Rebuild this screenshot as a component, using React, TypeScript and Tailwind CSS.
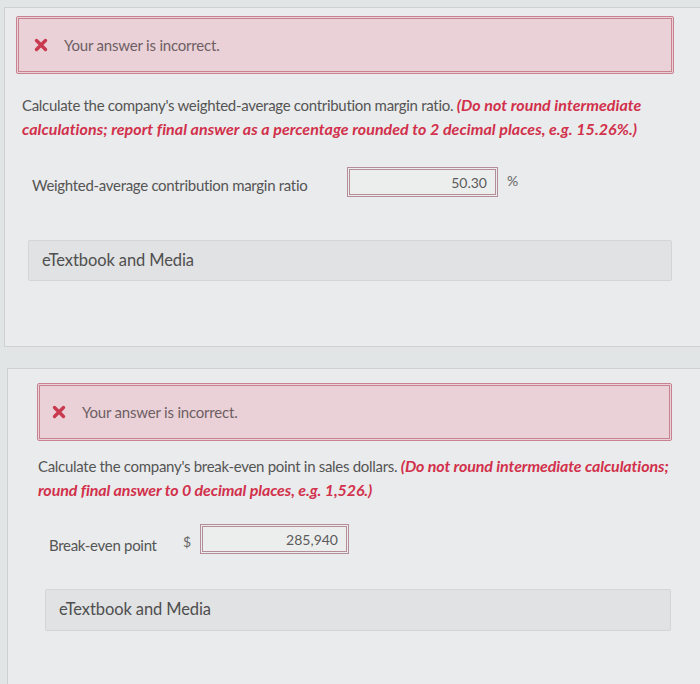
import React from "react";

function XIcon() {
  return (
    <svg width="14" height="14" viewBox="0 0 14 14" className="shrink-0">
      <path d="M2.5 2.5 L11.5 11.5 M11.5 2.5 L2.5 11.5" stroke="#c93a4f" strokeWidth="3.4" strokeLinecap="round" />
    </svg>
  );
}

function Alert({ className }: { className: string }) {
  return (
    <div className={"flex items-center border-[3px] border-double border-[#c98290] bg-[#e9d1d7] rounded-[2px] " + className}>
      <XIcon />
      <span className="ml-[16px] text-[15px] text-[#6e5e64] tracking-[-0.2px]">Your answer is incorrect.</span>
    </div>
  );
}

function Input({ value, className }: { value: string; className: string }) {
  return (
    <div className={"flex items-center justify-end border-[3px] border-double border-[#b58d98] bg-[#eceeee] pr-[8px] text-[14px] text-[#5b5b5b] " + className}>
      {value}
    </div>
  );
}

function Media({ className }: { className: string }) {
  return (
    <div className={"flex items-center border border-[#d3d6d7] bg-[#e0e2e3] rounded-[2px] pl-[13px] text-[16.5px] text-[#4f4f4f] tracking-[-0.1px] " + className}>
      eTextbook and Media
    </div>
  );
}

export default function App() {
  return (
    <div className="min-h-[684px] w-[700px] overflow-hidden bg-[#e2e5e6] font-['Lato','Noto_Sans',sans-serif] pt-[7px]">
      <div className="ml-[4px] w-[700px] h-[340px] border border-[#cdd1d2] bg-[#e9ebec] pt-[8px]">
        <Alert className="ml-[11px] w-[658px] h-[58px] pl-[15px]" />
        <p className="ml-[17px] mt-[19px] w-[660px] text-[15px] leading-[23px] text-[#555] tracking-[-0.3px]">
          Calculate the company's weighted-average contribution margin ratio.{" "}
          <b className="italic text-[16px] text-[#d2304b] tracking-[0.05px]">
            (Do not round intermediate calculations; report final answer as a percentage rounded to 2 decimal places, e.g. 15.26%.)
          </b>
        </p>
        <div className="mt-[26px] flex items-center">
          <span className="ml-[27px] w-[315px] pt-[7px] text-[15px] text-[#555] tracking-[-0.3px]">
            Weighted-average contribution margin ratio
          </span>
          <Input value="50.30" className="w-[151px] h-[30px]" />
          <span className="ml-[9px] text-[14px] text-[#666] self-start pt-[3px]">%</span>
        </div>
        <Media className="ml-[23px] mt-[43px] w-[644px] h-[41px]" />
      </div>

      <div className="ml-[7px] mt-[21px] w-[700px] h-[320px] border border-[#cdd1d2] bg-[#e9ebec] pt-[14px]">
        <Alert className="ml-[29px] w-[635px] h-[58px] pl-[12px]" />
        <p className="ml-[30px] mt-[13px] w-[650px] text-[15px] leading-[24px] text-[#555] tracking-[-0.3px]">
          Calculate the company's break-even point in sales dollars.{" "}
          <b className="italic text-[16px] text-[#d2304b] tracking-[-0.1px]">
            (Do not round intermediate calculations; round final answer to 0 decimal places, e.g. 1,526.)
          </b>
        </p>
        <div className="mt-[20px] flex items-center">
          <span className="ml-[41px] w-[134px] pt-[12px] text-[15px] text-[#555] tracking-[-0.3px]">Break-even point</span>
          <span className="w-[17px] pt-[5px] text-[14px] text-[#666]">$</span>
          <Input value="285,940" className="w-[149px] h-[30px]" />
        </div>
        <Media className="ml-[37px] mt-[32px] w-[626px] h-[42px]" />
      </div>
    </div>
  );
}
